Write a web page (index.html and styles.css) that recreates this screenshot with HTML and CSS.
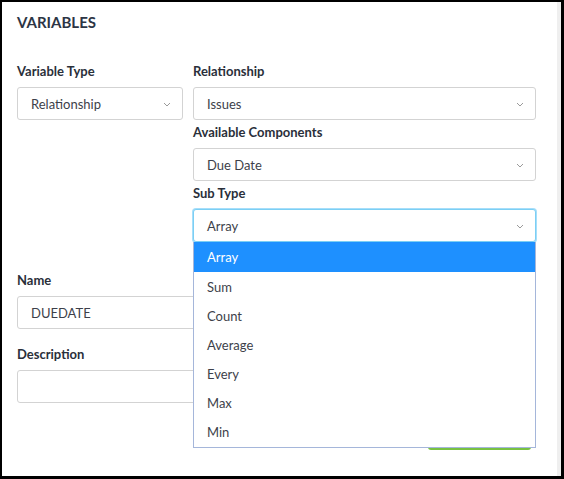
FILE: index.html
```html
<!DOCTYPE html>
<html>
<head>
<meta charset="utf-8">
<link rel="stylesheet" href="styles.css">
</head>
<body>
<div class="frame">
  <div class="panel">
    <h2 class="title">VARIABLES</h2>
    <div class="grid">
      <div class="col">
        <label class="label">Variable Type</label>
        <div class="select">
          <span>Relationship</span>
          <svg class="chev" width="8" height="5" viewBox="0 0 8 5"><polyline points="1,1 4,4 7,1" fill="none" stroke="#9a9a9a" stroke-width="1"/></svg>
        </div>
      </div>
      <div class="col">
        <label class="label">Relationship</label>
        <div class="select">
          <span>Issues</span>
          <svg class="chev" width="8" height="5" viewBox="0 0 8 5"><polyline points="1,1 4,4 7,1" fill="none" stroke="#9a9a9a" stroke-width="1"/></svg>
        </div>
        <label class="label spaced">Available Components</label>
        <div class="select">
          <span>Due Date</span>
          <svg class="chev" width="8" height="5" viewBox="0 0 8 5"><polyline points="1,1 4,4 7,1" fill="none" stroke="#9a9a9a" stroke-width="1"/></svg>
        </div>
        <label class="label spaced">Sub Type</label>
        <div class="select-wrap">
          <div class="select focused">
            <span>Array</span>
            <svg class="chev" width="8" height="5" viewBox="0 0 8 5"><polyline points="1,1 4,4 7,1" fill="none" stroke="#9a9a9a" stroke-width="1"/></svg>
          </div>
          <ul class="menu">
            <li class="opt active">Array</li>
            <li class="opt">Sum</li>
            <li class="opt">Count</li>
            <li class="opt">Average</li>
            <li class="opt">Every</li>
            <li class="opt">Max</li>
            <li class="opt">Min</li>
          </ul>
        </div>
      </div>
    </div>
    <div class="field name-field">
      <label class="label">Name</label>
      <div class="input">DUEDATE</div>
    </div>
    <div class="field desc-field">
      <label class="label">Description</label>
      <div class="input"></div>
    </div>
    <div class="actions">
      <button class="save">Save</button>
    </div>
  </div>
</div>
</body>
</html>
```

FILE: styles.css
```css
html, body {
  margin: 0;
  padding: 0;
  background: #000;
}
body {
  font-family: Lato, "Open Sans", sans-serif;
}
.frame {
  width: 564px;
  height: 479px;
  box-sizing: border-box;
  border-style: solid;
  border-color: #000;
  border-width: 2px 3px 3px 2px;
  background: #fff;
  overflow: hidden;
}
.panel {
  height: 100%;
  box-sizing: border-box;
  padding: 11px 21px 0 15px;
  border-right: 4px solid #efefef;
  background: #fff;
}
.title {
  margin: 0 0 32px 0;
  font-size: 15px;
  line-height: 18px;
  font-weight: 700;
  color: #2c3545;
  letter-spacing: 0;
}
.grid {
  display: grid;
  grid-template-columns: 166px 343px;
  column-gap: 10px;
}
.col {
  display: flex;
  flex-direction: column;
}
.label {
  display: block;
  font-size: 13px;
  line-height: 16px;
  font-weight: 700;
  color: #2a2f3a;
  margin-bottom: 8px;
}
.label.spaced {
  margin-top: 4px;
}
.select, .input {
  position: relative;
  height: 33px;
  box-sizing: border-box;
  border: 1px solid #d3d3d3;
  border-radius: 3px;
  background: #fff;
  display: flex;
  align-items: center;
  padding-left: 13px;
  font-size: 13px;
  color: #3d3f4a;
}
.chev {
  position: absolute;
  right: 11px;
  top: 14px;
}
.select-wrap {
  position: relative;
}
.select.focused {
  border-color: #7ccff4;
  box-shadow: 0 0 0 1px #a6defa;
}
.menu {
  position: absolute;
  top: 100%;
  left: 0;
  right: 0;
  margin: 0;
  padding: 0;
  list-style: none;
  border: 1px solid #a5b6da;
  border-top: none;
  background: #fff;
  z-index: 5;
}
.opt {
  height: 29.1px;
  line-height: 31px;
  padding-left: 13px;
  font-size: 13px;
  color: #3d3f4a;
  overflow: hidden;
}
.opt.active {
  background: #1e90ff;
  color: #fff;
  height: 30px;
  line-height: 30px;
}
.name-field {
  margin-top: 30px;
}
.desc-field {
  margin-top: 17px;
}
.field .input {
  width: 519px;
}
.actions {
  display: flex;
  justify-content: flex-end;
  width: 514px;
  margin-top: 15px;
}
.save {
  width: 103px;
  height: 32px;
  border: none;
  border-radius: 3px;
  background: #78c142;
  color: #fff;
  font-family: Lato, sans-serif;
  font-size: 13px;
}
```
